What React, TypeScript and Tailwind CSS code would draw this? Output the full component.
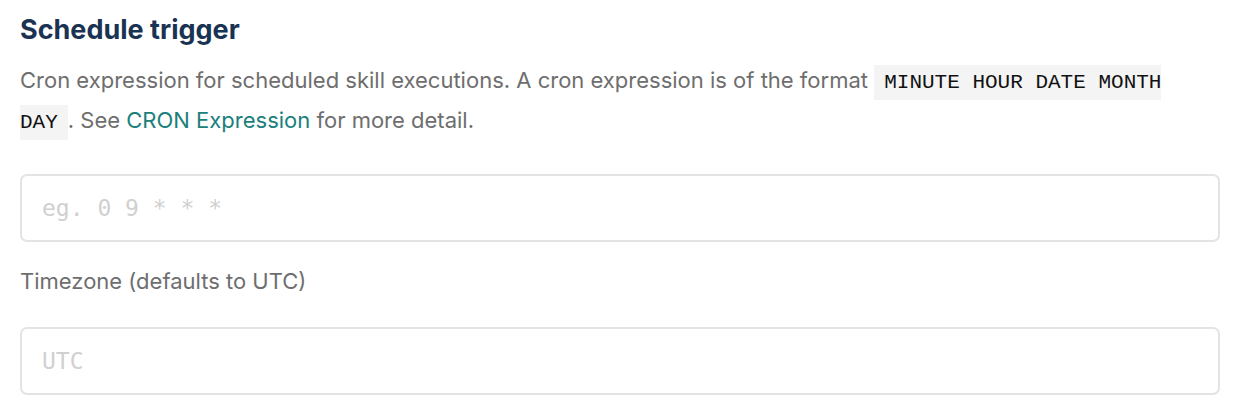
import React from "react";

const Code: React.FC<{ children: React.ReactNode }> = ({ children }) => (
  <code className="bg-[#f4f4f4] px-[10px] py-[6px] font-['Liberation_Mono',monospace] text-[21px] leading-none text-[#111]">
    {children}
  </code>
);

const Field: React.FC<{ placeholder: string }> = ({ placeholder }) => (
  <input
    type="text"
    placeholder={placeholder}
    className="h-[68px] w-full rounded-[7px] border-2 border-[#e3e3e3] px-[20px] font-['DejaVu_Sans_Mono',monospace] text-[23px] outline-none placeholder:text-[#d0d0d0]"
  />
);

export default function App() {
  return (
    <div className="bg-white px-[20px] pt-[14px] font-['Inter',sans-serif]">
      <h2 className="text-[27px] font-bold leading-[32px] text-[#1b3352]">
        Schedule trigger
      </h2>
      <p className="mt-[14px] text-[22px] leading-[40px] text-[#6e6e6e]">
        Cron expression for scheduled skill executions. A cron expression is of
        the format <Code>MINUTE HOUR DATE MONTH DAY</Code>. See{" "}
        <a href="#" className="text-[#1b7f7b]">
          CRON Expression
        </a>{" "}
        for more detail.
      </p>
      <div className="mt-[34px]">
        <Field placeholder="eg. 0 9 * * *" />
      </div>
      <label className="mt-[19px] block text-[22px] leading-[40px] text-[#6e6e6e]">
        Timezone (defaults to UTC)
      </label>
      <div className="mt-[26px] pb-[22px]">
        <Field placeholder="UTC" />
      </div>
    </div>
  );
}
